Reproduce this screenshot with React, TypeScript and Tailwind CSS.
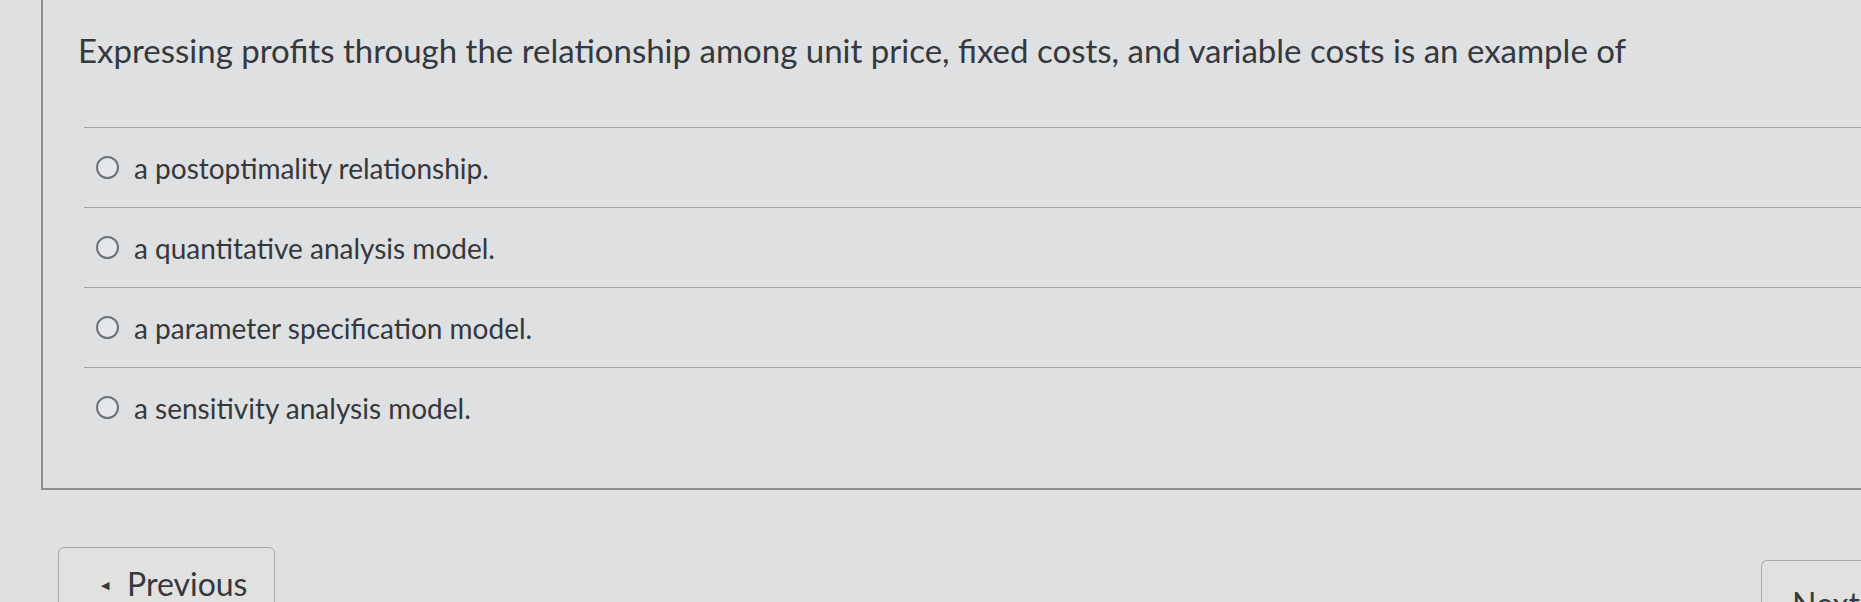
import React from "react";

const options = [
  "a postoptimality relationship.",
  "a quantitative analysis model.",
  "a parameter specification model.",
  "a sensitivity analysis model.",
];

const Radio = () => (
  <span className="block w-[23px] h-[23px] shrink-0 rounded-full border-2 border-[#6f7276] bg-[#e6e7e8]" />
);

const App = () => {
  return (
    <div
      className="w-[1861px] h-[602px] overflow-hidden bg-[#dfe0e1] text-[#35383d]"
      style={{ fontFamily: "Lato, 'Open Sans', sans-serif" }}
    >
      {/* question panel */}
      <section className="ml-[41px] border-l-2 border-b-2 border-[#8c8e90] pb-[41px]">
        <h1 className="pl-[35px] pt-[30px] text-[33px] leading-[40px] font-normal whitespace-nowrap">
          Expressing profits through the relationship among unit price, fixed
          costs, and variable costs is an example of
        </h1>
        <ul className="mt-[57px] ml-[41px]">
          {options.map((opt) => (
            <li
              key={opt}
              className="h-[80px] border-t border-[#a0a2a4] first:border-t-[1.5px] flex items-center gap-[15px] pl-[12px]"
            >
              <Radio />
              <span className="text-[28px] leading-[32px]">{opt}</span>
            </li>
          ))}
        </ul>
      </section>

      {/* nav buttons */}
      <div className="flex items-start justify-between mt-[57px]">
        <button className="ml-[58px] w-[217px] h-[80px] rounded-[6px] border-[1.5px] border-[#a9abad] bg-[#e1e1e0] flex items-start gap-[18px] pl-[42px] pt-[17px] text-[32px] leading-[38px] text-[#35383d]">
          <span className="text-[11px] leading-[40px]">◀</span>
          <span>Previous</span>
        </button>
        <button className="mt-[13px] w-[100px] h-[80px] rounded-tl-[6px] border-[1.5px] border-r-0 border-[#a9abad] bg-[#e1e1e0] pl-[30px] pt-[8px] text-left text-[32px] leading-[38px] text-[#35383d]">
          Next
        </button>
      </div>
    </div>
  );
};

export default App;
